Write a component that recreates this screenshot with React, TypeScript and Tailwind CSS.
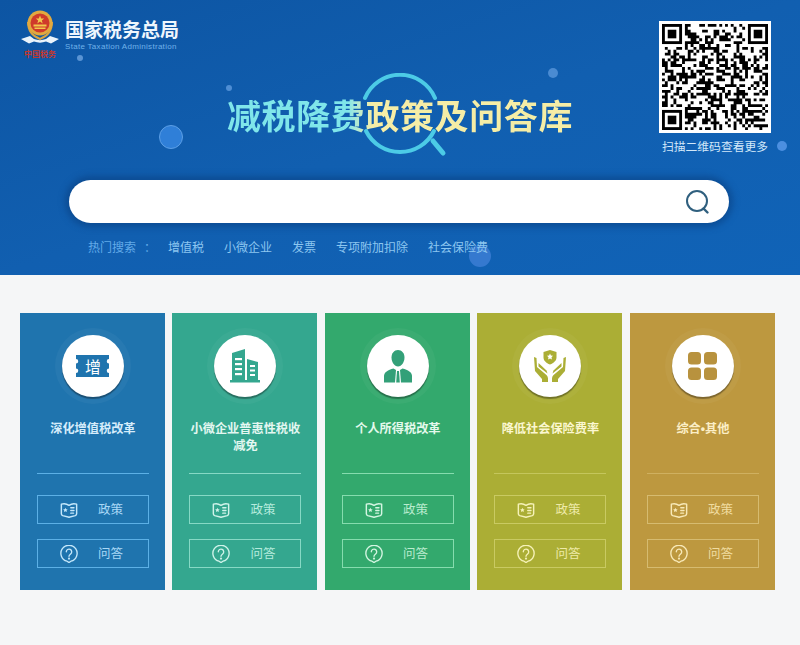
import React from 'react';

const cnFont = "font-['Noto_Sans_CJK_SC','Noto_Sans',sans-serif]";

const hotWords = ['增值税', '小微企业', '发票', '专项附加扣除', '社会保险费'];

// fake qr modules, seeded so that every render gives the same picture
const buildQrPath = () => {
  const size = 37;
  let seed = 20190127;
  const next = () => {
    seed = (seed * 1664525 + 1013904223) % 4294967296;
    return seed / 4294967296;
  };
  const inFinder = (x: number, y: number) =>
    (x < 8 && y < 8) || (x >= size - 8 && y < 8) || (x < 8 && y >= size - 8);
  let d = '';
  for (let y = 0; y < size; y++) {
    for (let x = 0; x < size; x++) {
      const filled = next() > 0.5;
      if (filled && !inFinder(x, y)) d += `M${x} ${y}h1v1h-1z`;
    }
  }
  return d;
};
const qrPath = buildQrPath();

const Finder = ({ x, y }: { x: number; y: number }) => (
  <g>
    <rect x={x + 0.5} y={y + 0.5} width="6" height="6" fill="none" stroke="#000" />
    <rect x={x + 2} y={y + 2} width="3" height="3" fill="#000" />
  </g>
);

const QrCode = () => (
  <div className="w-[112px] h-[112px] bg-white p-[3px]">
    <svg viewBox="0 0 37 37" className="w-full h-full block">
      <path d={qrPath} fill="#000" />
      <Finder x={0} y={0} />
      <Finder x={30} y={0} />
      <Finder x={0} y={30} />
    </svg>
  </div>
);

const Emblem = () => (
  <svg viewBox="0 0 40 40" className="w-10 h-10 block">
    <path d="M8 13c0 8 4 14 12 17 8-3 12-9 12-17" fill="none" stroke="#d9a441" strokeWidth="2" />
    <circle cx="20" cy="14" r="12.5" fill="#e2a93f" />
    <circle cx="20" cy="14" r="9.5" fill="#cf3a2b" />
    <path d="M20 6.5l1.2 3h3l-2.4 1.9.9 3-2.7-1.8-2.7 1.8.9-3-2.4-1.9h3z" fill="#f2c94c" />
    <rect x="13.5" y="15.5" width="13" height="2" fill="#f2c94c" />
    <rect x="14.5" y="18.5" width="11" height="1.5" fill="#f2c94c" />
    <path d="M1 30l9-3 4 3c4 1.500 8 1.500 12 0l4-3 9 3-8 4.500-5-2c-4 1.500-8 1.500-12 0l-5 2z" fill="#eaf3fb" />
  </svg>
);

const BigSearchRing = () => (
  <svg viewBox="0 0 100 100" className="absolute left-1/2 top-[-21px] -ml-[50px] w-[100px] h-[100px]">
    <g fill="none" stroke="#4ccbe6" strokeWidth="4" strokeLinecap="round">
      <path d="M15 25A38 38 0 0 1 85 25" />
      <path d="M16 58A38 38 0 0 0 84 58" />
      <path d="M83 68L93 80" strokeWidth="5" />
    </g>
  </svg>
);

const BookIcon = ({ color }: { color: string }) => (
  <svg viewBox="0 0 20 18" className="w-[18px] h-[18px] shrink-0" fill="none" stroke={color} strokeWidth="1.600" strokeLinejoin="round">
    <path d="M1.500 2.500C4.500 1.500 7.500 2 10 3.800c2.500-1.800 5.500-2.300 8.500-1.300v10.700c0 1-.6 1.700-1.500 2.100L10 17l-7-1.700c-.9-.4-1.500-1.100-1.500-2.100z" />
    <path d="M12 6.500h3.500M12 9.500h3.500M12 12.500h3" strokeLinecap="round" />
    <path d="M6 6.500l.8 1.600 1.700.2-1.200 1.200.3 1.700-1.600-.8-1.600.8.300-1.700-1.200-1.200 1.700-.2z" fill={color} stroke="none" />
  </svg>
);

const QuestionIcon = ({ color }: { color: string }) => (
  <svg viewBox="0 0 20 20" className="w-[18px] h-[18px] shrink-0" fill="none" stroke={color} strokeWidth="1.500" strokeLinecap="round" strokeLinejoin="round">
    <path d="M7.800 18A9 9 0 1 1 12.200 18L10 19.500z" />
    <path d="M7 7.600a3 3 0 1 1 4.800 2.400c-1.100.8-1.800 1.300-1.800 2.600" />
    <circle cx="10" cy="15" r=".5" fill={color} />
  </svg>
);

const TicketIcon = ({ color }: { color: string }) => (
  <div className="relative w-[33px] h-[22px]">
    <svg viewBox="0 0 33 22" className="w-full h-full block">
      <path
        d="M0 0h33v4a2.200 2.200 0 0 0 0 4.500v5a2.200 2.200 0 0 0 0 4.500v4H0v-4a2.200 2.200 0 0 0 0-4.500v-5A2.200 2.200 0 0 0 0 4z"
        fill={color}
      />
    </svg>
    <span className={`absolute inset-0 flex items-center justify-center text-[16px] leading-none text-white ${cnFont}`}>增</span>
  </div>
);

const BuildingIcon = ({ color }: { color: string }) => (
  <svg viewBox="0 0 32 34" className="w-8 h-[34px]" fill={color}>
    <path d="M3 4l13-4v31H3z" />
    <path d="M18 10l11 3v18H18z" />
    <rect x="1" y="31" width="30" height="2.500" />
    <g fill="#fff">
      <rect x="6" y="9" width="7" height="2.200" />
      <rect x="6" y="14" width="7" height="2.200" />
      <rect x="6" y="19" width="7" height="2.200" />
      <rect x="6" y="24" width="7" height="2.200" />
      <rect x="21" y="16" width="5" height="2" />
      <rect x="21" y="20.500" width="5" height="2" />
      <rect x="21" y="25" width="5" height="2" />
    </g>
  </svg>
);

const PersonIcon = ({ color }: { color: string }) => (
  <svg viewBox="0 0 28 33" className="w-7 h-[33px]" fill={color}>
    <path d="M14 0c3.800 0 6.500 3.200 6.500 7.500 0 4.500-2.800 9-6.500 9s-6.500-4.500-6.500-9C7.500 3.200 10.200 0 14 0z" />
    <path d="M9.500 18.500l2.500 1.500-1 12.500H0v-6.500c0-3.800 4-6 9.500-7.500z" />
    <path d="M18.500 18.500L16 20l1 12.500h11v-6.500c0-3.800-4-6-9.500-7.500z" />
    <path d="M13 21h2l.8 11.500h-3.600z" />
  </svg>
);

const HandsIcon = ({ color }: { color: string }) => (
  <svg viewBox="0 0 32 32" className="w-8 h-8" fill={color}>
    <path fillRule="evenodd" d="M16 0l6.500 2v5.500c0 3-2.700 5.500-6.500 7-3.800-1.500-6.500-4-6.500-7V2zM16 3.500l-.9 2-2.100.3 1.500 1.500-.4 2.100 1.900-1 1.900 1-.4-2.100 1.500-1.500-2.100-.3z" />
    <path d="M0 7l2.500 1 .5 9 6.500 5.500c2.500 2 4.500 3.500 4.500 6V32H8v-3L1 21z" />
    <path d="M32 7l-2.500 1-.5 9-6.500 5.500c-2.500 2-4.500 3.500-4.500 6V32h6v-3l7-8z" />
    <path d="M4.500 13l8 7.500 1 3-9-7z" />
    <path d="M27.500 13l-8 7.500-1 3 9-7z" />
  </svg>
);

const GridIcon = ({ color }: { color: string }) => (
  <svg viewBox="0 0 29 28" className="w-[29px] h-7" fill={color}>
    <rect x="0" y="0" width="13" height="12.500" rx="3.500" />
    <rect x="16" y="0" width="13" height="12.500" rx="3.500" />
    <rect x="0" y="15.500" width="13" height="12.500" rx="3.500" />
    <rect x="16" y="15.500" width="13" height="12.500" rx="3.500" />
  </svg>
);

const cards = [
  {
    title: <>深化增值税改革</>,
    Icon: TicketIcon,
    bg: 'bg-[#1f74ae]',
    iconColor: '#1f74ae',
    text: 'text-[#d5ecfb]',
    btnText: 'text-[#a9d8f6]',
    border: 'border-[#5cb0e6]',
    divider: 'bg-[#5cb0e6]',
    glyph: '#c5e8fb',
  },
  {
    title: <>小微企业普惠性税收减免</>,
    Icon: BuildingIcon,
    bg: 'bg-[#34a78f]',
    iconColor: '#34a78f',
    text: 'text-[#e3f7f1]',
    btnText: 'text-[#b5ebdd]',
    border: 'border-[#86d9c5]',
    divider: 'bg-[#86d9c5]',
    glyph: '#d0f3ea',
  },
  {
    title: <>个人所得税改革</>,
    Icon: PersonIcon,
    bg: 'bg-[#33a96d]',
    iconColor: '#33a078',
    text: 'text-[#e4f9ec]',
    btnText: 'text-[#b9eccf]',
    border: 'border-[#86dcae]',
    divider: 'bg-[#86dcae]',
    glyph: '#d4f5e2',
  },
  {
    title: <>降低社会保险费率</>,
    Icon: HandsIcon,
    bg: 'bg-[#abae35]',
    iconColor: '#abae35',
    text: 'text-[#fbf7d0]',
    btnText: 'text-[#eeeaa8]',
    border: 'border-[#c9ca62]',
    divider: 'bg-[#c4c65c]',
    glyph: '#f6f2b8',
  },
  {
    // 中间的点要窄，CJK 字体里是全角
    title: (
      <>
        综合<span className="font-['Liberation_Sans',sans-serif]">•</span>其他
      </>
    ),
    Icon: GridIcon,
    bg: 'bg-[#bd983f]',
    iconColor: '#b8923e',
    text: 'text-[#fbeec6]',
    btnText: 'text-[#f0dca0]',
    border: 'border-[#d6bb70]',
    divider: 'bg-[#cfb060]',
    glyph: '#f8e9b8',
  },
];

const Card = ({ item }: { item: (typeof cards)[number] }) => {
  const { Icon } = item;
  return (
    <div className={`w-[145px] h-[277px] pt-[22px] pl-[17px] pr-[16px] flex flex-col ${item.bg}`}>
      <div className="flex justify-center">
        <div className="w-[62px] h-[62px] rounded-full bg-white flex items-center justify-center shadow-[0_2px_1px_rgba(0,0,0,0.35),0_0_0_7px_rgba(255,255,255,0.04)]">
          <Icon color={item.iconColor} />
        </div>
      </div>
      <div className={`mt-[23px] h-[53px] text-center text-[12.2px] leading-[17px] font-bold ${item.text}`}>
        {item.title}
      </div>
      <div className={`h-px ${item.divider}`}></div>
      <div className={`mt-[21px] h-[29px] border flex items-center pl-[22px] gap-5 text-[12.5px] ${item.border} ${item.btnText}`}>
        <BookIcon color={item.glyph} />
        <span>政策</span>
      </div>
      <div className={`mt-[15px] h-[29px] border flex items-center pl-[22px] gap-5 text-[12.5px] ${item.border} ${item.btnText}`}>
        <QuestionIcon color={item.glyph} />
        <span>问答</span>
      </div>
    </div>
  );
};

export default function App() {
  return (
    <div className={`w-[800px] h-[645px] overflow-hidden bg-[#f5f6f7] ${cnFont}`}>
      {/* 顶部蓝色区域 */}
      <header className="relative h-[275px] pt-[9px] bg-gradient-to-br from-[#0d55a3] via-[#115fb0] to-[#1063b7] overflow-hidden">
        {/* 装饰圆点 */}
        <div className="absolute left-[159px] top-[125px] w-6 h-6 rounded-full bg-[#2f7fd8] border border-[#5c9fe6]"></div>
        <div className="absolute left-[469px] top-[245px] w-[22px] h-[22px] rounded-full bg-[#3f80d6]/80"></div>
        <div className="absolute left-[77px] top-[55px] w-[6px] h-[6px] rounded-full bg-[#5a94d4]"></div>
        <div className="absolute left-[548px] top-[68px] w-[10px] h-[10px] rounded-full bg-[#4a8bd2]"></div>
        <div className="absolute left-[226px] top-[85px] w-[6px] h-[6px] rounded-full bg-[#4f8ed4]"></div>
        <div className="absolute left-[777px] top-[141px] w-[10px] h-[10px] rounded-full bg-[#4c8fe0]"></div>

        <div className="relative grid grid-cols-[1fr_auto_1fr]">
          <div className="flex items-start pl-5 gap-[5px]">
            <div className="w-10 flex flex-col items-center">
              <Emblem />
              <span className="text-[8px] leading-[10px] text-[#c2382f] font-bold">中国税务</span>
            </div>
            <div className="pt-[9px]">
              <div className="text-[19px] leading-[21px] font-bold text-[#eef6fd] whitespace-nowrap">国家税务总局</div>
              <div className="mt-[3px] font-['Liberation_Sans',sans-serif] text-[8px] leading-[9px] tracking-[0.3px] text-[#6fb2ea] whitespace-nowrap">
                State Taxation Administration
              </div>
            </div>
          </div>

          <div className="relative mt-[85px] h-[41px] w-[348px]">
            <BigSearchRing />
            <h1 className="relative text-[34px] leading-[41px] font-bold tracking-[0.6px] whitespace-nowrap text-center text-transparent bg-clip-text bg-gradient-to-r from-[#7fe6ea] from-35% to-[#f5eda6] to-42%">
              减税降费政策及问答库
            </h1>
          </div>

          <div className="flex justify-end pr-[29px] pt-3">
            <div className="w-[112px]">
              <QrCode />
              <div className="mt-1 text-[11.8px] leading-[18px] text-center text-[#d2e8fa] whitespace-nowrap">扫描二维码查看更多</div>
            </div>
          </div>
        </div>

        {/* 搜索框 */}
        <div className="relative mt-[25px] ml-[69px] w-[660px] h-[43px] rounded-full bg-white flex items-center justify-end pr-[18px] shadow-[0_0_6px_4px_rgba(10,62,125,0.55)]">
          <svg viewBox="0 0 26 26" className="w-[26px] h-[26px]" fill="none" stroke="#2f5f7e" strokeWidth="2" strokeLinecap="round">
            <circle cx="12" cy="12" r="10" />
            <path d="M18.500 19.500l4 4" strokeWidth="2.400" />
          </svg>
        </div>

        {/* 热门搜索 */}
        <div className="relative mt-[15px] pl-[88px] flex items-center text-[12px] leading-[18px] text-[#8cc6f0]">
          <span className="w-[80px] text-[#62aae8]">
            热门搜索<span className="ml-2">：</span>
          </span>
          <div className="flex gap-5">
            {hotWords.map((word) => (
              <span key={word}>{word}</span>
            ))}
          </div>
        </div>
      </header>

      {/* 分类卡片 */}
      <main className="pt-[38px] pl-[19.9px] flex gap-[7.5px]">
        {cards.map((item) => (
          <Card key={item.iconColor} item={item} />
        ))}
      </main>
    </div>
  );
}
